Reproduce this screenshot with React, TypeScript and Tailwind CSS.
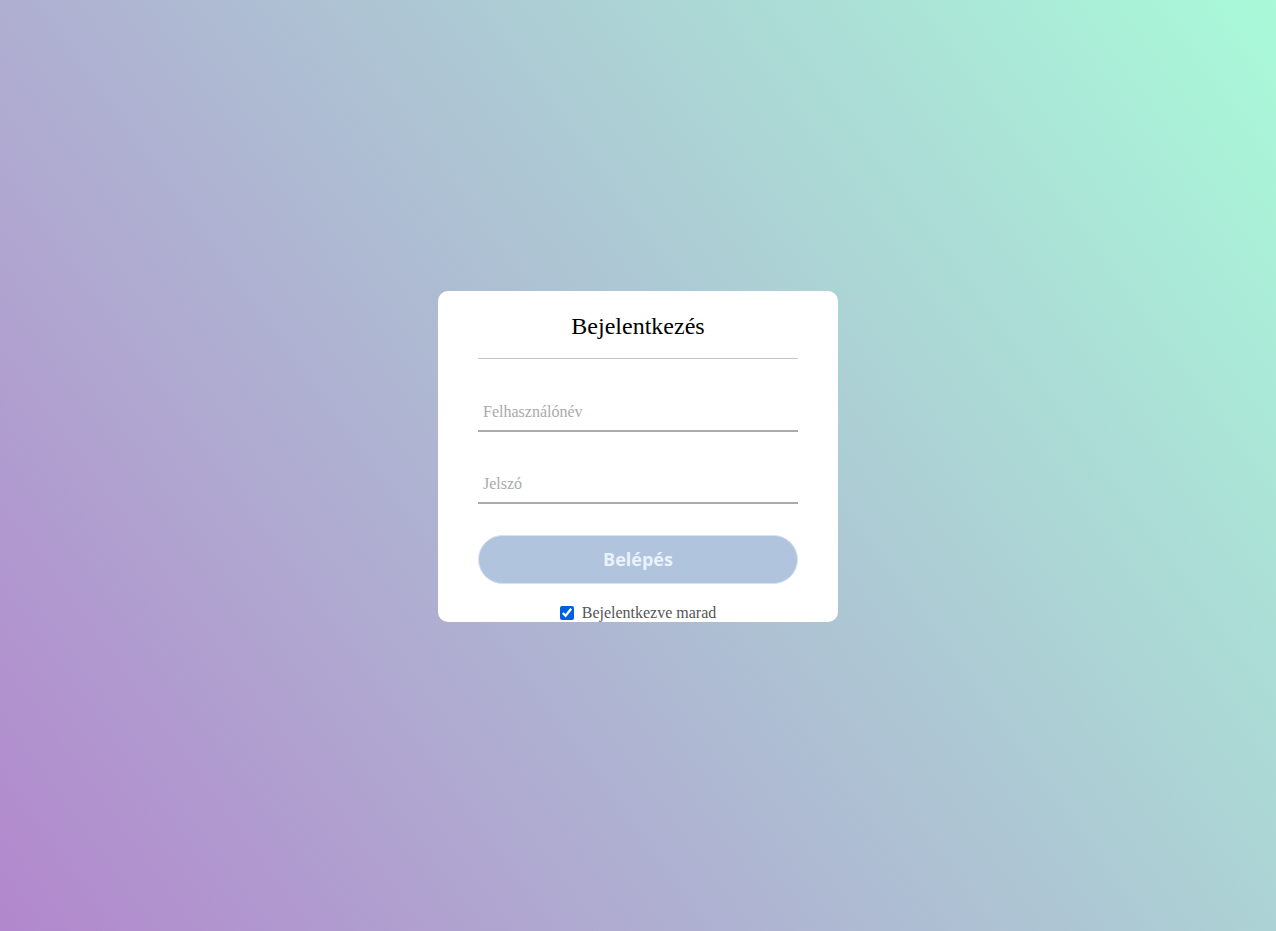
import React from "react";

export default function App() {
  return (
    <div className="h-[931px] w-full overflow-hidden bg-[linear-gradient(54deg,#b287cd,#a9fad9)] flex justify-center pt-[291px]">
      <div className="w-[400px] h-[331px] bg-white rounded-[10px] px-10 font-['Liberation_Serif',serif]">
        <h2 className="pt-[22px] text-center text-[24px] leading-[27px] text-black">Bejelentkezés</h2>
        <div className="mt-[18px] h-px bg-[#c4c4c4]" />
        <input
          type="text"
          placeholder="Felhasználónév"
          className="mt-[31px] block w-full h-[42px] px-[5px] pt-[3px] border-b-2 border-[#aaaaaa] text-[16px] outline-none placeholder:text-[#aaaaaa] font-['Liberation_Serif',serif]"
        />
        <input
          type="password"
          placeholder="Jelszó"
          className="mt-[30px] block w-full h-[42px] px-[5px] pt-[3px] border-b-2 border-[#aaaaaa] text-[16px] outline-none placeholder:text-[#aaaaaa] font-['Liberation_Serif',serif]"
        />
        <button className="mt-[31px] block w-full h-[49px] rounded-full bg-[#b0c4de] border border-[#d6e2f0] text-[#eaf2fc] text-[18px] font-bold font-['Open_Sans',sans-serif]">
          Belépés
        </button>
        <label className="mt-[20px] flex items-center justify-center gap-[8px] text-[16px] leading-[18px] text-[#555555]">
          <input type="checkbox" defaultChecked className="w-[14px] h-[14px] accent-[#0060df]" />
          <span>Bejelentkezve marad</span>
        </label>
      </div>
    </div>
  );
}
